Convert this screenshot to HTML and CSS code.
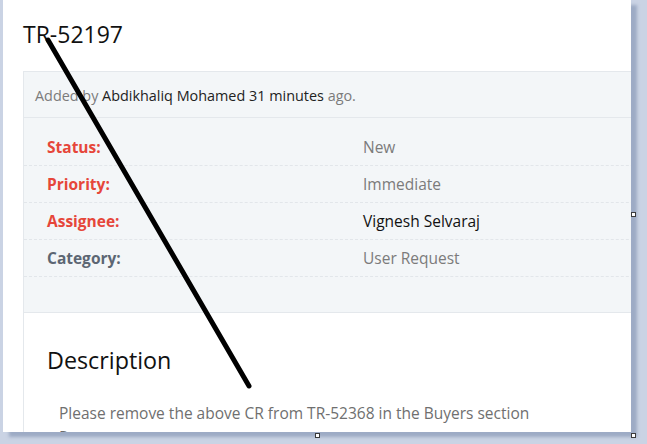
FILE: index.html
```html
<!DOCTYPE html>
<html>

<head>
    <meta charset="utf-8">
    <title>TR-52197</title>
    <link rel="stylesheet" href="styles.css">
</head>

<body>
    <div class="shot">
        <div class="page">
            <h1 class="ticket-title">TR-52197</h1>

            <div class="ticket">
                <div class="ticket-meta">
                    Added by <span class="who">Abdikhaliq Mohamed</span> <span class="who">31 minutes</span> ago.
                </div>

                <div class="fields">
                    <div class="field">
                        <span class="field-label">Status:</span>
                        <span class="field-value">New</span>
                    </div>
                    <div class="field">
                        <span class="field-label">Priority:</span>
                        <span class="field-value">Immediate</span>
                    </div>
                    <div class="field">
                        <span class="field-label">Assignee:</span>
                        <span class="field-value person">Vignesh Selvaraj</span>
                    </div>
                    <div class="field">
                        <span class="field-label plain">Category:</span>
                        <span class="field-value">User Request</span>
                    </div>
                </div>

                <div class="description">
                    <h2>Description</h2>
                    <p>Please remove the above CR from TR-52368 in the Buyers section<br>Reason</p>
                </div>
            </div>
        </div>

        <!-- annotation drawn on top of the screenshot -->
        <svg class="markup" width="647" height="444" viewBox="0 0 647 444">
            <line x1="48" y1="40" x2="249" y2="386" stroke="#000" stroke-width="5" stroke-linecap="round"/>
        </svg>
        <span class="handle handle-right"></span>
        <span class="handle handle-bottom"></span>
        <span class="handle handle-corner"></span>
    </div>
</body>

</html>
```

FILE: styles.css
```css
html, body {
  margin: 0;
  height: 100%;
  background: #cad3e4;
  overflow: hidden;
}

.shot {
  position: relative;
  width: 647px;
  height: 444px;
}

.page {
  /* the white cropped screenshot */
  margin-left: 3px;
  width: 628px;
  height: 432px;
  background: #fff;
  overflow: hidden;
  box-shadow: 6px 5px 3px rgba(120, 138, 172, .55);
  padding-left: 20px;
  box-sizing: border-box;
  font-family: "Open Sans", "Liberation Sans", sans-serif;
}

.ticket-title {
  margin: 0;
  padding-top: 18px;
  height: 71px;
  box-sizing: border-box;
  font-size: 23px;
  font-weight: 400;
  line-height: 32px;
  color: #111;
}

.ticket {
  width: 660px;
  border: 1px solid #e4e8ec;
  border-right: none;
  background: #f3f6f8;
}

.ticket-meta {
  height: 45px;
  padding-left: 11px;
  line-height: 47px;
  font-size: 14.4px;
  color: #7b7b7b;
  border-bottom: 1px solid #e4e8ec;
}

.ticket-meta .who {
  color: #222;
}

.fields {
  padding: 11px 0 35px;
  border-bottom: 1px solid #e4e8ec;
}

.field {
  display: flex;
  height: 36px;
  align-items: center;
  padding-left: 23px;
  border-bottom: 1px dashed #e2e6ea;
  font-size: 15.5px;
}

.field-label {
  width: 316px;
  font-weight: 700;
  color: #e6463a;
}

.field-label.plain {
  color: #5c6673;
}

.field-value {
  color: #7b7b7b;
}

.field-value.person {
  color: #111;
}

.description {
  background: #fff;
  padding: 30px 0 0 23px;
  height: 200px;
}

.description h2 {
  margin: 0;
  font-size: 23.3px;
  font-weight: 400;
  line-height: 34px;
  color: #111;
}

.description p {
  margin: 24px 0 0 12px;
  font-size: 15.5px;
  line-height: 24px;
  color: #6f6f6f;
}

.markup {
  position: absolute;
  left: 0;
  top: 0;
}

.handle {
  position: absolute;
  width: 3px;
  height: 3px;
  background: #fff;
  border: 1px solid #3a3a3a;
}

.handle-right {
  left: 631px;
  top: 212px;
}

.handle-bottom {
  left: 315px;
  top: 433px;
}

.handle-corner {
  left: 631px;
  top: 433px;
}
```
